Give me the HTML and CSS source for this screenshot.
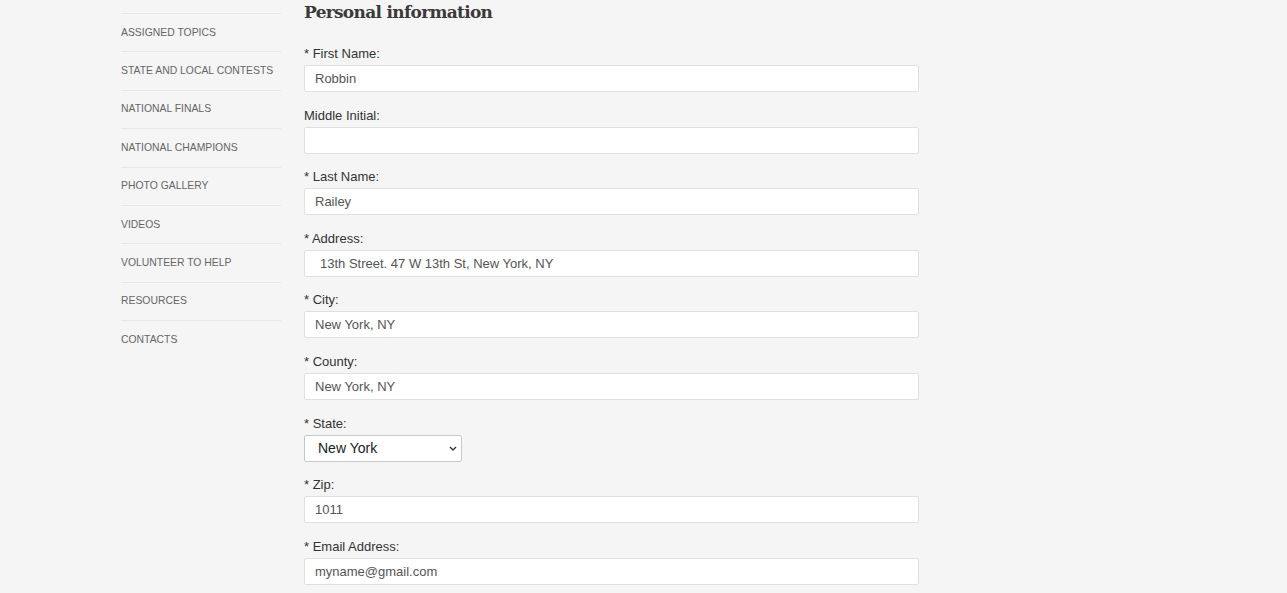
FILE: index.html
```html
<!DOCTYPE html>
<html>
<head>
<meta charset="utf-8">
<title>Personal information</title>
<link rel="stylesheet" href="styles.css">
</head>
<body>
<div class="page">
  <ul class="sidenav">
    <li><a href="#">Assigned Topics</a></li>
    <li><a href="#">State and Local Contests</a></li>
    <li><a href="#">National Finals</a></li>
    <li><a href="#">National Champions</a></li>
    <li><a href="#">Photo Gallery</a></li>
    <li><a href="#">Videos</a></li>
    <li><a href="#">Volunteer to Help</a></li>
    <li><a href="#">Resources</a></li>
    <li><a href="#">Contacts</a></li>
  </ul>

  <form class="infoForm">
    <h2>Personal information</h2>

    <div class="field">
      <label>* First Name:</label>
      <input type="text" value="Robbin">
    </div>
    <div class="field">
      <label>Middle Initial:</label>
      <input type="text" value="">
    </div>
    <div class="field">
      <label>* Last Name:</label>
      <input type="text" value="Railey">
    </div>
    <div class="field">
      <label>* Address:</label>
      <input type="text" class="addr" value="13th Street. 47 W 13th St, New York, NY">
    </div>
    <div class="field">
      <label>* City:</label>
      <input type="text" value="New York, NY">
    </div>
    <div class="field">
      <label>* County:</label>
      <input type="text" value="New York, NY">
    </div>
    <div class="field">
      <label>* State:</label>
      <span class="selectWrap">
        <select>
          <option>New York</option>
          <option>New Jersey</option>
          <option>Connecticut</option>
        </select>
        <svg class="chev" width="8" height="5" viewBox="0 0 8 5"><path d="M1 1 L4 4 L7 1" fill="none" stroke="#333" stroke-width="1.4"/></svg>
      </span>
    </div>
    <div class="field">
      <label>* Zip:</label>
      <input type="text" value="1011">
    </div>
    <div class="field">
      <label>* Email Address:</label>
      <input type="text" value="myname@gmail.com">
    </div>
  </form>
</div>
</body>
</html>
```

FILE: styles.css
```css
html, body { margin: 0; padding: 0; background: #f5f5f5; }
body { font-family: "Liberation Sans", Arial, sans-serif; color: #333; }

.page { display: flex; padding-left: 121px; gap: 23px; }

/* left menu */
.sidenav { list-style: none; margin: 13px 0 0; padding: 0; width: 160px; }
.sidenav li { height: 38.4px; box-sizing: border-box; border-top: 1px solid #e6e6e6; display: flex; align-items: center; }
.sidenav a { font-size: 10.4px; text-transform: uppercase; color: #666; text-decoration: none; margin-top: -1px; }
.sidenav a:hover { color: #222; }

/* form */
.infoForm { width: 615px; }
.infoForm h2 { font-family: "DejaVu Serif", serif; font-size: 17px; font-weight: bold; color: #3a3a3a; margin: 0 0 20px; line-height: 24px; letter-spacing: -0.7px; }
.field { height: 61.6px; }
.field label { display: block; font-size: 13px; line-height: 18px; padding-top: 1px; margin-bottom: 2px; color: #333; }
.field input { box-sizing: border-box; width: 615px; height: 27px; margin: 0; border: 1px solid #e0e0e0; border-radius: 2px; background: #fff; padding: 0 10px; font-family: "Liberation Sans", Arial, sans-serif; font-size: 13px; color: #555; outline: none; }
.field input.addr { padding-left: 15px; }
.selectWrap { position: relative; display: inline-block; }
.field select { box-sizing: border-box; width: 158px; height: 27px; margin: 0; border: 1px solid #c8c8c8; border-radius: 2px; background: #fff; padding: 0 13px; font-family: "Liberation Sans", Arial, sans-serif; font-size: 14px; color: #222; appearance: none; -webkit-appearance: none; display: block; }
.chev { position: absolute; right: 5px; top: 11px; pointer-events: none; }
```
